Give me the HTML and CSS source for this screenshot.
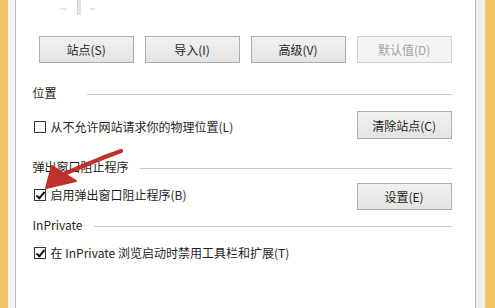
FILE: index.html
```html
<!DOCTYPE html>
<html lang="zh-CN">
<head>
<meta charset="utf-8">
<title>Internet 选项 - 隐私</title>
<link rel="stylesheet" href="styles.css">
</head>
<body>
<div class="frame">
  <div class="edge-left"></div>
  <main class="panel">
    <div class="top-strip">
      <span class="tick"></span>
      <span class="thumb"></span>
      <span class="tick tick-right"></span>
    </div>
    <div class="button-row">
      <button class="btn">站点(S)</button>
      <button class="btn">导入(I)</button>
      <button class="btn">高级(V)</button>
      <button class="btn" disabled>默认值(D)</button>
    </div>

    <div class="group-header header-location">
      <span class="group-title">位置</span>
      <span class="group-line line-wide"></span>
    </div>
    <div class="option-row row-location">
      <label class="check"><span class="box"></span><span>从不允许网站请求你的物理位置(L)</span></label>
      <button class="btn btn-tall">清除站点(C)</button>
    </div>

    <div class="group-header header-popup">
      <span class="group-title">弹出窗口阻止程序</span>
      <span class="group-line"></span>
    </div>
    <div class="option-row row-popup">
      <label class="check"><span class="box checked"></span><span>启用弹出窗口阻止程序(B)</span></label>
      <button class="btn">设置(E)</button>
    </div>

    <div class="group-header header-private">
      <span class="group-title">InPrivate</span>
      <span class="group-line"></span>
    </div>
    <div class="option-row row-private">
      <label class="check"><span class="box checked"></span><span>在 InPrivate 浏览启动时禁用工具栏和扩展(T)</span></label>
    </div>

    <svg class="arrow" width="130" height="60" viewBox="0 0 130 60" aria-hidden="true">
      <path d="M121 11 C104 17 88 24 66 33" stroke="#c1312b" stroke-width="4.2" fill="none" stroke-linecap="round"/>
      <path d="M52 26 L76 41 L46 48 Z" fill="#c1312b" stroke="#c1312b" stroke-width="2" stroke-linejoin="round"/>
    </svg>
  </main>
  <div class="edge-right"></div>
</div>
</body>
</html>
```

FILE: styles.css
```css
* { box-sizing: border-box; }
html, body {
  margin: 0;
  padding: 0;
  background: #ffffff;
}
body {
  width: 495px;
  height: 308px;
  overflow: hidden;
  font-family: "Noto Sans CJK SC", "Noto Sans", sans-serif;
  font-size: 12px;
  color: #1e1e1e;
}
.frame {
  display: flex;
  height: 308px;
}
.edge-left {
  width: 16px;
  background: linear-gradient(to right, #f2c667 0, #f2c667 8px, #f4f4f4 8px, #f4f4f4 15px, #b9b9b9 15px);
}
.edge-right {
  width: 21px;
  background: linear-gradient(to right, #b9b9b9 0, #b9b9b9 1px, #f0f0f0 1px, #f0f0f0 10px, #f2c667 10px);
}
.panel {
  position: relative;
  flex: 1;
  display: flex;
  flex-direction: column;
  padding: 0 23px 0 17px;
  background: #ffffff;
}
.top-strip {
  height: 36px;
  display: flex;
  align-items: flex-start;
  padding-left: 27px;
}
.tick {
  width: 7px;
  height: 2px;
  margin-top: 8px;
  background: #e6e6e6;
}
.thumb {
  width: 4px;
  height: 15px;
  margin-left: 10px;
  background: #e2e2e2;
  border-left: 1px solid #d2d2d2;
}
.tick-right {
  width: 5px;
  margin-left: 9px;
}
.button-row {
  display: flex;
  gap: 11px;
  padding-left: 6px;
}
.btn {
  width: 95px;
  height: 27px;
  padding: 0;
  font-family: "Noto Sans CJK SC", "Noto Sans", sans-serif;
  font-size: 12px;
  color: #1e1e1e;
  background: linear-gradient(#f1f1f1, #e3e3e3);
  border: 1px solid #adadad;
  border-radius: 0;
}
.btn:disabled {
  color: #a3a3a3;
  background: #f4f4f4;
  border-color: #d2d2d2;
}
.btn-tall { height: 28px; }
.group-header {
  display: flex;
  align-items: center;
  height: 16px;
  line-height: 16px;
}
.group-title { white-space: nowrap; }
.group-line {
  flex: 1;
  height: 1px;
  margin-left: 11px;
  margin-top: 2px;
  background: #c9c9c9;
}
.line-wide { margin-left: 30px; }
.header-location { margin-top: 22px; }
.header-popup { margin-top: 20px; }
.header-private { margin-top: 7px; }
.option-row {
  display: flex;
  align-items: center;
  justify-content: space-between;
}
.row-location { margin-top: 10px; }
.row-location .check { margin-top: 4px; }
.row-popup { margin-top: 8px; }
.row-popup .check { margin-top: -3px; }
.row-private { margin-top: 12px; height: 16px; }
.check {
  display: flex;
  align-items: center;
  gap: 5px;
  line-height: 16px;
  padding-left: 1px;
}
.box {
  position: relative;
  width: 12px;
  height: 12px;
  border: 1px solid #333333;
  background: #ffffff;
}
.box.checked::after {
  content: "";
  position: absolute;
  left: 3px;
  top: 0px;
  width: 3px;
  height: 7px;
  border-right: 2px solid #111111;
  border-bottom: 2px solid #111111;
  transform: rotate(40deg);
}
.arrow {
  position: absolute;
  top: 140px;
  left: -16px;
}
```
